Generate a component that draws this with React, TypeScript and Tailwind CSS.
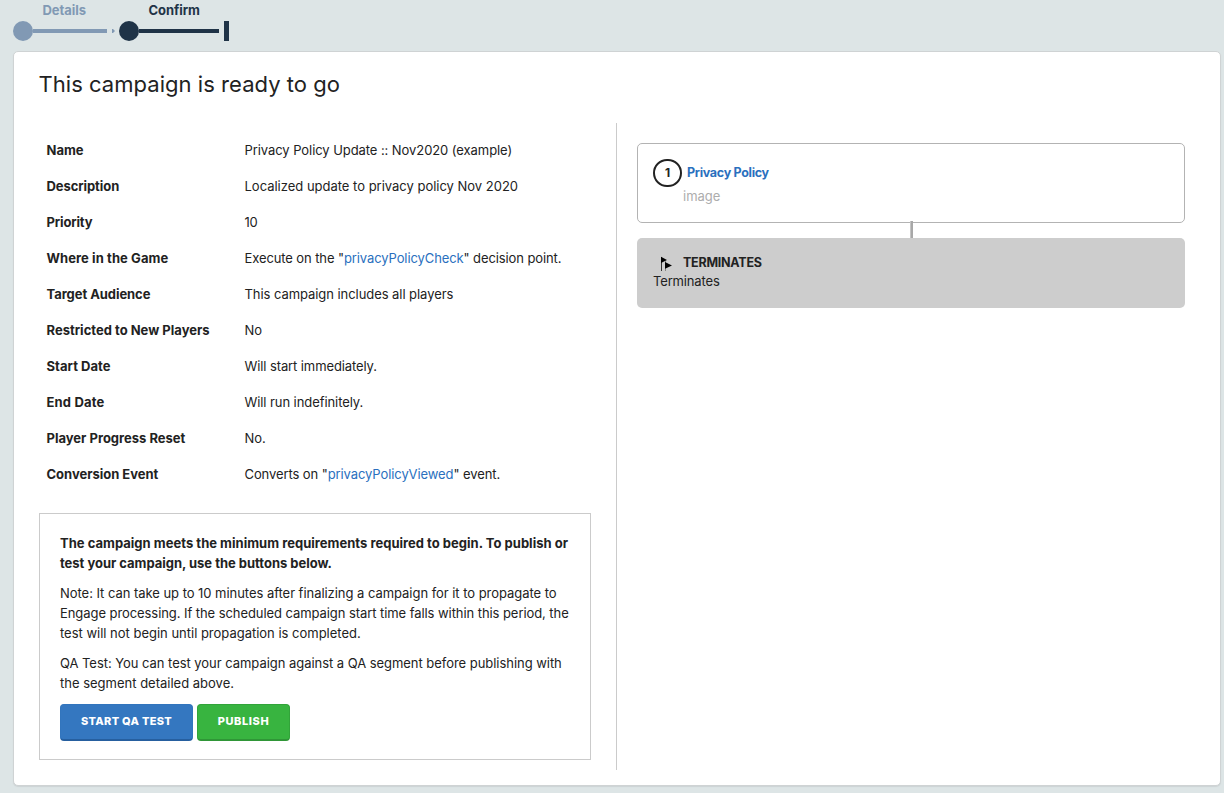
import React from 'react';

type Row = { label: string; labelCls: string; value: React.ReactNode; valueCls: string };

const Link = ({ children }: { children: React.ReactNode }) => (
  <a className="text-[#2a70be]">{children}</a>
);

const rows: Row[] = [
  { label: 'Name', labelCls: '', value: 'Privacy Policy Update :: Nov2020 (example)', valueCls: 'tracking-[-0.07px]' },
  { label: 'Description', labelCls: 'tracking-[-0.08px]', value: 'Localized update to privacy policy Nov 2020', valueCls: 'tracking-[-0.01px]' },
  { label: 'Priority', labelCls: 'tracking-[-0.15px]', value: '10', valueCls: 'tracking-[-0.3px]' },
  {
    label: 'Where in the Game',
    labelCls: 'tracking-[0.08px]',
    value: (
      <>
        Execute on the "<Link>privacyPolicyCheck</Link>" decision point.
      </>
    ),
    valueCls: 'tracking-[-0.1px]',
  },
  { label: 'Target Audience', labelCls: 'tracking-[-0.06px]', value: 'This campaign includes all players', valueCls: 'tracking-[-0.06px]' },
  { label: 'Restricted to New Players', labelCls: 'tracking-[0.01px]', value: 'No', valueCls: '' },
  { label: 'Start Date', labelCls: 'tracking-[0.05px]', value: 'Will start immediately.', valueCls: 'tracking-[-0.1px]' },
  { label: 'End Date', labelCls: 'tracking-[0.18px]', value: 'Will run indefinitely.', valueCls: 'tracking-[-0.08px]' },
  { label: 'Player Progress Reset', labelCls: '', value: 'No.', valueCls: '' },
  {
    label: 'Conversion Event',
    labelCls: 'tracking-[-0.02px]',
    value: (
      <>
        Converts on "<Link>privacyPolicyViewed</Link>" event.
      </>
    ),
    valueCls: 'tracking-[-0.09px]',
  },
];

function Steps() {
  return (
    <nav className="flex h-[51px] pl-[13px] text-[13px] font-bold">
      <div className="w-[106px] text-[#8199b4]">
        <div className="h-[21px] pl-[29.5px] leading-5 tracking-[-0.05px]">Details</div>
        <div className="flex h-5 items-center">
          <span className="size-5 rounded-full bg-[#8199b4]" />
          <span className="h-1 w-[74px] bg-[#8199b4]" />
          <svg className="ml-[5px]" width="3" height="4" viewBox="0 0 3 4">
            <path d="M0 0h1l2 2-2 2H0z" fill="#8199b4" />
          </svg>
        </div>
      </div>
      <div className="text-[#1f3347]">
        <div className="h-[21px] pl-[29.5px] leading-5 tracking-[-0.05px]">Confirm</div>
        <div className="flex h-5 items-center">
          <span className="size-5 rounded-full bg-[#1f3347]" />
          <span className="h-1 w-[80px] bg-[#1f3347]" />
          <span className="ml-[5px] h-5 w-[5px] bg-[#1f3347]" />
        </div>
      </div>
    </nav>
  );
}

function Notice() {
  return (
    <section className="h-[247px] w-[552px] border border-[#cbcbcb] pt-[19px] pl-5 text-[13px] leading-5 whitespace-nowrap">
      <p className="mb-2.5 font-bold">
        <span className="block tracking-[0.02px]">The campaign meets the minimum requirements required to begin. To publish or</span>
        <span className="block tracking-[-0.02px]">test your campaign, use the buttons below.</span>
      </p>
      <p className="mb-2.5">
        <span className="block tracking-[-0.04px]">Note: It can take up to 10 minutes after finalizing a campaign for it to propagate to</span>
        <span className="block tracking-[-0.07px]">Engage processing. If the scheduled campaign start time falls within this period, the</span>
        <span className="block tracking-[-0.01px]">test will not begin until propagation is completed.</span>
      </p>
      <p className="mb-[11px]">
        <span className="block tracking-[-0.04px]">QA Test: You can test your campaign against a QA segment before publishing with</span>
        <span className="block">the segment detailed above.</span>
      </p>
      <div className="flex gap-1 text-[11px] font-extrabold text-white">
        <button className="h-[37px] w-[133px] rounded-[4px] border border-b-2 border-[#3275bd] border-b-[#265f9f] bg-[#3477c0] pb-0.5 tracking-[0.3px]">
          START QA TEST
        </button>
        <button className="h-[37px] w-[93px] rounded-[4px] border border-b-2 border-[#32a43a] border-b-[#2f9637] bg-[#38b440] pb-0.5 tracking-[0.6px]">
          PUBLISH
        </button>
      </div>
    </section>
  );
}

function Flow() {
  return (
    <div className="mt-5 ml-5 flex w-[548px] flex-col">
      <div className="h-20 rounded-[5px] border border-[#b3b3b3] pt-[15px] pl-[15px]">
        <div className="flex items-center">
          <span className="flex h-7 w-[29px] items-center justify-center rounded-full border-2 border-[#222] text-[12px] font-bold">1</span>
          <span className="ml-[5px] text-[12.5px] font-bold tracking-[-0.3px] text-[#2a70be]">Privacy Policy</span>
        </div>
        <div className="pl-[30px] text-[13px] leading-[18px] text-[#adadad]">image</div>
      </div>
      <div className="-mt-[2px] ml-[273px] h-[17px] w-[3px] border-x border-r-2 border-[#c4c4c4] border-r-[#a8a8a8]" />
      <div className="h-[70px] rounded-[5px] bg-[#cdcdcd] pt-[15px] pl-4">
        <div className="flex h-[19px] items-center">
          <svg className="mt-[2px] ml-[7px]" width="13" height="16" viewBox="0 0 13 16">
            <path d="M1.5 1v14" stroke="#333" strokeWidth="1" />
            <path d="M5.5 5v10" stroke="#888" strokeWidth="1" />
            <path d="M1 0.8l6 3.2-6 3zM5 6l7 3.5-7 3.2z" fill="#000" />
          </svg>
          <span className="mt-0.5 ml-[10px] text-[12.5px] font-bold tracking-[-0.25px]">TERMINATES</span>
        </div>
        <div className="text-[13px] leading-[19px] tracking-[-0.15px]">Terminates</div>
      </div>
    </div>
  );
}

export default function App() {
  return (
    <div className="h-[793px] w-[1224px] overflow-hidden bg-[#dde5e6] font-['Inter','Liberation_Sans',sans-serif] text-[#222]">
      <Steps />
      <main className="ml-[13px] h-[735px] w-[1208px] rounded-[5px] border border-[#cfd3d4] bg-white shadow-[0_1px_1px_#cdd3d5]">
        <h1 className="h-[71px] pt-4 pl-[24.5px] text-[22px] leading-8 tracking-[0.04px]">This campaign is ready to go</h1>
        <div className="flex">
          <div className="w-[602px] pl-[25px]">
            <dl className="h-[390px] pt-[9px] pl-[7.5px] text-[13px]">
              {rows.map((r) => (
                <div key={r.label} className="flex h-9 leading-9">
                  <dt className={`w-[198px] font-bold ${r.labelCls}`}>{r.label}</dt>
                  <dd className={`whitespace-nowrap ${r.valueCls}`}>{r.value}</dd>
                </div>
              ))}
            </dl>
            <Notice />
          </div>
          <div className="h-[647px] border-l border-[#cbcbcb]">
            <Flow />
          </div>
        </div>
      </main>
    </div>
  );
}
